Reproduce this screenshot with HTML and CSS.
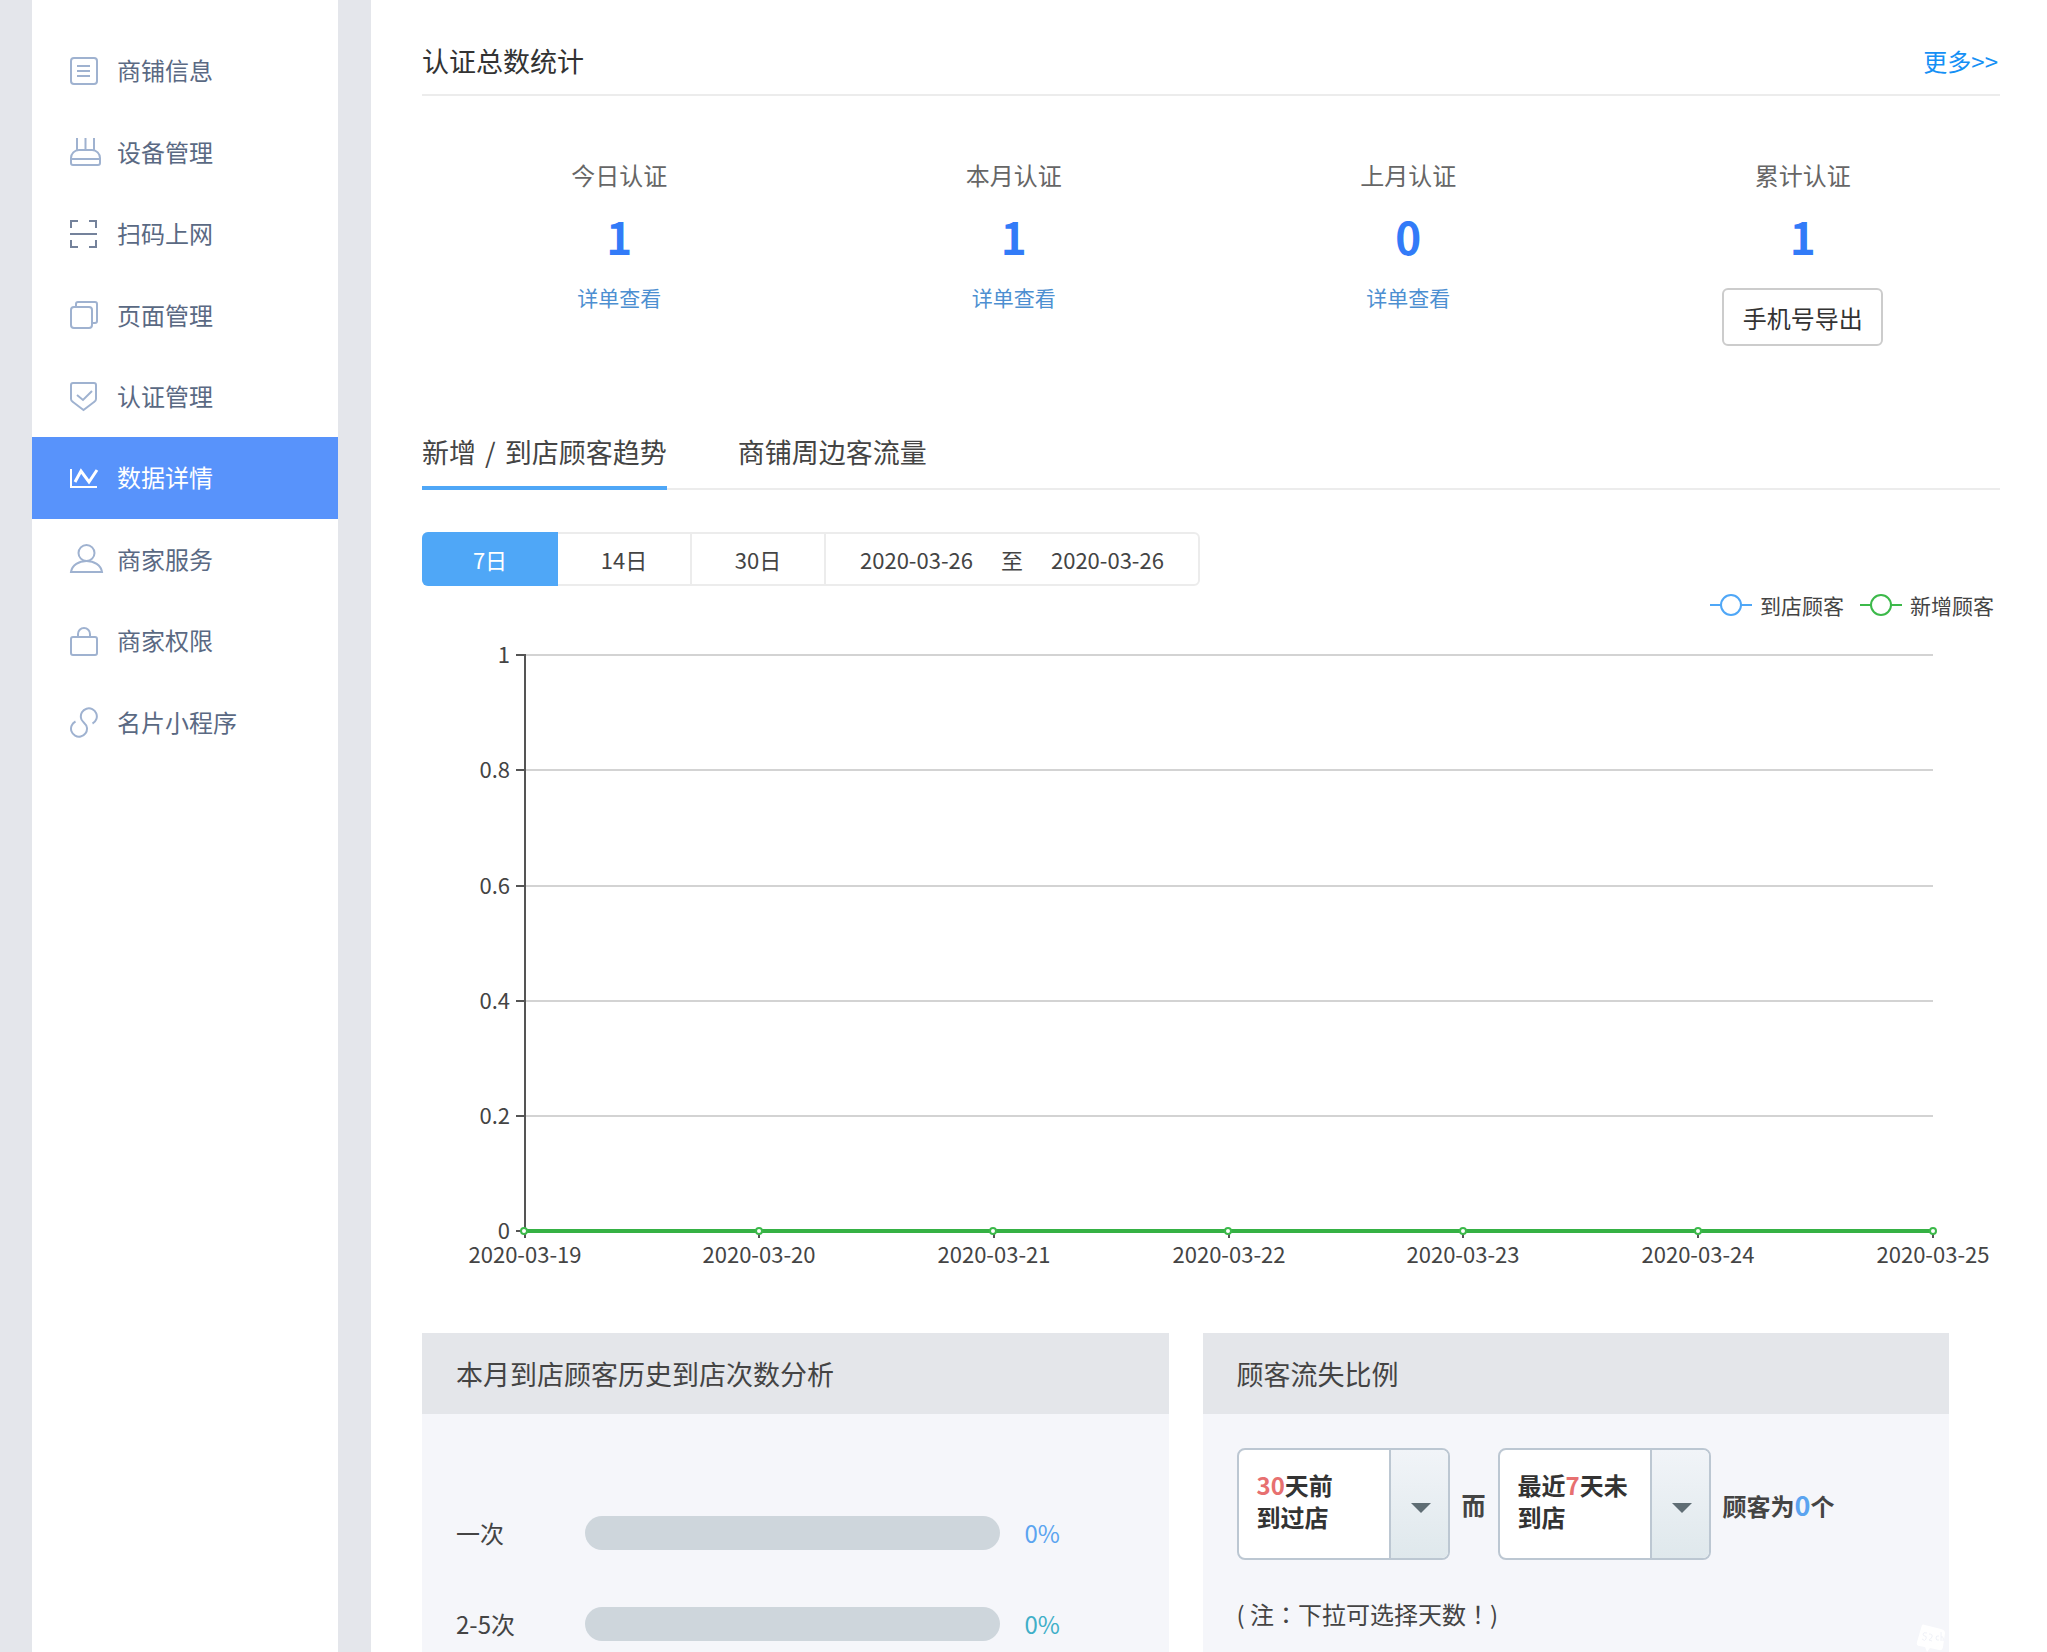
FILE: index.html
```html
<!DOCTYPE html>
<html lang="zh-CN">

<head>
    <meta charset="UTF-8">
    <meta name="viewport" content="width=device-width, initial-scale=1.0">
    <title>数据详情</title>
    <link rel="stylesheet" href="styles.css">
</head>

<body>
    <div class="page">
        <div class="sidebar">
            <nav class="menu">
                <a href="#">
                    <svg class="icon" viewBox="0 0 36 32"><rect x="2" y="3" width="26" height="26" rx="3"/><path d="M8 11h13M8 16h13M8 21h13"/></svg>
                    商铺信息
                </a>
                <a href="#">
                    <svg class="icon" viewBox="0 0 36 32"><path d="M8 2v12M16.500 2v12M25 2v12M2 27v-5a8 8 0 0 1 8-8h13a8 8 0 0 1 8 8v5q0 2-2 2H4q-2 0-2-2zM2 23h29"/></svg>
                    设备管理
                </a>
                <a href="#">
                    <svg class="icon icon-dark" viewBox="0 0 36 32"><path d="M2 10V3h7M20 3h7v7M1 16h27M2 22v7h7M20 29h7v-7"/></svg>
                    扫码上网
                </a>
                <a href="#">
                    <svg class="icon" viewBox="0 0 36 32"><rect x="2" y="8" width="21" height="21" rx="3"/><path d="M7 8V5q0-2 2-2h17q2 0 2 2v17q0 2-2 2h-3"/></svg>
                    页面管理
                </a>
                <a href="#">
                    <svg class="icon" viewBox="0 0 36 32"><path d="M4 3h21q2 0 2 2v14q0 2-2 3l-10.500 8L4 22q-2-1-2-3V5q0-2 2-2zM8 15l6 5 9-9"/></svg>
                    认证管理
                </a>
                <a href="#" class="active">
                    <svg class="icon" viewBox="0 0 36 32"><path d="M2 7v18h26"/><path class="thick" d="M6 20l6-11 8 11 8-12"/></svg>
                    数据详情
                </a>
                <a href="#">
                    <svg class="icon" viewBox="0 0 36 32"><circle cx="17.500" cy="10" r="8"/><path d="M2 29h31c-1-7-8-11-15.500-11S3 22 2 29z"/></svg>
                    商家服务
                </a>
                <a href="#">
                    <svg class="icon" viewBox="0 0 36 32"><rect x="2" y="12" width="26" height="18" rx="2"/><path d="M9 12V9a6 6 0 0 1 12 0v3"/></svg>
                    商家权限
                </a>
                <a href="#">
                    <svg class="icon" viewBox="0 0 36 32"><path d="M23.500 17.500A8 8 0 1 0 12 12c0 4 6 5 6 10A8 8 0 1 1 6.500 15.500"/></svg>
                    名片小程序
                </a>
            </nav>
        </div>

        <main class="main">
            <header class="head">
                <h1>认证总数统计</h1>
                <a href="#">更多&gt;&gt;</a>
            </header>

            <section class="stats">
                <div class="stat">
                    <p>今日认证</p>
                    <strong>1</strong>
                    <a href="#">详单查看</a>
                </div>
                <div class="stat">
                    <p>本月认证</p>
                    <strong>1</strong>
                    <a href="#">详单查看</a>
                </div>
                <div class="stat">
                    <p>上月认证</p>
                    <strong>0</strong>
                    <a href="#">详单查看</a>
                </div>
                <div class="stat">
                    <p>累计认证</p>
                    <strong>1</strong>
                    <button type="button">手机号导出</button>
                </div>
            </section>

            <div class="tabs">
                <button type="button" class="on">新增 <span>/</span> 到店顾客趋势</button>
                <button type="button">商铺周边客流量</button>
            </div>

            <div class="range">
                <button type="button" class="on">7日</button>
                <button type="button">14日</button>
                <button type="button">30日</button>
                <div class="dates">
                    <span>2020-03-26</span>
                    <span>至</span>
                    <span>2020-03-26</span>
                </div>
            </div>

            <div class="legend">
                <span class="blue"><svg viewBox="0 0 42 24"><path d="M0 12h42"/><circle cx="21" cy="12" r="10"/></svg>到店顾客</span>
                <span class="green"><svg viewBox="0 0 42 24"><path d="M0 12h42"/><circle cx="21" cy="12" r="10"/></svg>新增顾客</span>
            </div>

            <svg class="chart" viewBox="0 -20 1578 660">
                <path class="grid" d="M104 15h1407M104 130h1407M104 246h1407M104 361h1407M104 476h1407"/>
                <path class="axis" d="M103 14v584M94 15h9M94 130h9M94 246h9M94 361h9M94 476h9M94 591h9M337 591v7M572 591v7M807 591v7M1041 591v7M1276 591v7M1511 591v7"/>
                <g class="ylabel">
                    <text x="88" y="23">1</text>
                    <text x="88" y="138">0.8</text>
                    <text x="88" y="254">0.6</text>
                    <text x="88" y="369">0.4</text>
                    <text x="88" y="484">0.2</text>
                    <text x="88" y="599">0</text>
                </g>
                <g class="xlabel">
                    <text x="103" y="623">2020-03-19</text>
                    <text x="337" y="623">2020-03-20</text>
                    <text x="572" y="623">2020-03-21</text>
                    <text x="807" y="623">2020-03-22</text>
                    <text x="1041" y="623">2020-03-23</text>
                    <text x="1276" y="623">2020-03-24</text>
                    <text x="1511" y="623">2020-03-25</text>
                </g>
                <path class="line" d="M102 591h1409"/>
                <g class="dots">
                    <circle cx="102" cy="591" r="3"/>
                    <circle cx="337" cy="591" r="3"/>
                    <circle cx="571" cy="591" r="3"/>
                    <circle cx="806" cy="591" r="3"/>
                    <circle cx="1041" cy="591" r="3"/>
                    <circle cx="1276" cy="591" r="3"/>
                    <circle cx="1511" cy="591" r="3"/>
                </g>
            </svg>

            <div class="cards">
                <section class="card">
                    <h2>本月到店顾客历史到店次数分析</h2>
                    <div class="bars">
                        <div class="bar-row">
                            <span>一次</span>
                            <div class="bar"></div>
                            <span class="pct">0%</span>
                        </div>
                        <div class="bar-row">
                            <span>2-5次</span>
                            <div class="bar"></div>
                            <span class="pct teal">0%</span>
                        </div>
                    </div>
                </section>

                <section class="card">
                    <h2>顾客流失比例</h2>
                    <div class="lost">
                        <label class="pick">
                            <span><em>30</em>天前<br>到过店</span>
                            <select>
                                <option>30</option>
                                <option>60</option>
                                <option>90</option>
                            </select>
                        </label>
                        <b>而</b>
                        <label class="pick">
                            <span>最近<em>7</em>天未到店</span>
                            <select>
                                <option>7</option>
                                <option>14</option>
                                <option>30</option>
                            </select>
                        </label>
                        <b>顾客为<i>0</i>个</b>
                    </div>
                    <p class="tip" lang="ja">( 注：下拉可选择天数！)</p>
                    <svg class="bubble" viewBox="0 0 32 28"><path fill="#fff" d="M7 1q1-1 3 0l16 4q4 1 4 4l-2 14q-1 4-4 3l-9-2-3 4-2-5-6-1q-3-1-2-4z"/><path fill="none" stroke="#f0f2f8" d="M12 9q-4-1-4 1t2 2 1 3-4 0M14 10q4 0 3 3-2 3-3 3l3 1M24 12q-3-1-3 2t3 2M26 8v9m0-4q3-1 2 4"/></svg>
                </section>
            </div>
        </main>
    </div>
</body>

</html>
```

FILE: styles.css
```css
* {
    box-sizing: border-box;
}

body {
    margin: 0;
    font-family: "Noto Sans CJK SC", "Noto Sans", sans-serif;
    font-size: 24px;
    color: #444;
}

h1, h2, p {
    margin: 0;
    font-weight: normal;
}

a {
    text-decoration: none;
}

button {
    font-family: inherit;
    color: inherit;
    background: none;
    border: 0;
    padding: 0;
    cursor: pointer;
}

.page {
    display: flex;
    gap: 33px;
    min-height: 100vh;
    padding-left: 32px;
    background: #e4e6eb;
}

/* sidebar */
.sidebar {
    flex: none;
    width: 306px;
    padding-top: 30px;
    background: #fff;
}

.menu {
    display: grid;
    grid-template-rows: repeat(9, 1fr);
    height: 733px;
}

.menu a {
    display: flex;
    align-items: center;
    gap: 12px;
    padding: 0 0 2px 37px;
    color: #5a6983;
}

.menu a.active {
    background: #5893fb;
    color: #fff;
}

.icon {
    width: 36px;
    height: 32px;
    margin-top: 2px;
    fill: none;
    stroke: #9fb2d0;
    stroke-width: 2;
}

.icon-dark {
    stroke: #74829b;
}

.active .icon {
    stroke: #fff;
}

.icon .thick {
    stroke-width: 3;
}

/* main */
.main {
    flex: 1;
    min-width: 0;
    display: flex;
    flex-direction: column;
    padding: 30px 47px 0 51px;
    background: #fff;
}

.head {
    display: flex;
    justify-content: space-between;
    align-items: center;
    height: 66px;
    padding: 0 2px 4px 0;
    border-bottom: 2px solid #ececec;
}

.head h1 {
    font-size: 27px;
    color: #333;
}

.head a {
    color: #1590f5;
}

.stats {
    display: grid;
    grid-template-columns: repeat(4, 1fr);
    margin-top: 61px;
    text-align: center;
}

.stat {
    display: flex;
    flex-direction: column;
    align-items: center;
}

.stat p {
    line-height: 36px;
    color: #666;
}

.stat strong {
    margin-top: 13px;
    font-size: 44px;
    line-height: 60px;
    color: #327bf8;
}

.stat a {
    margin-top: 16px;
    font-size: 21px;
    line-height: 30px;
    color: #4d8fd1;
}

.stat button {
    margin-top: 22px;
    width: 161px;
    height: 58px;
    border: 2px solid #ccc;
    border-radius: 6px;
    font-size: 24px;
    color: #333;
}

.tabs {
    display: flex;
    gap: 71px;
    margin-top: 73px;
    border-bottom: 2px solid #ececec;
}

.tabs button {
    margin-bottom: -2px;
    padding-bottom: 1px;
    border-bottom: 4px solid transparent;
    font-size: 27px;
    line-height: 66px;
}

.tabs span {
    margin: 0 3px;
}

.tabs .on {
    border-color: #4fa7f7;
}

.range {
    display: flex;
    align-self: flex-start;
    height: 54px;
    margin-top: 42px;
    border: 2px solid #ececec;
    border-radius: 6px;
    font-size: 22px;
}

.range button {
    width: 134px;
    border-right: 2px solid #ececec;
    font-size: 22px;
}

.range .on {
    width: 136px;
    margin: -2px 0 -2px -2px;
    border: 0;
    border-radius: 6px 0 0 6px;
    background: #4fa7f7;
    color: #fff;
}

.dates {
    display: flex;
    align-items: center;
    gap: 28px;
    padding: 0 34px;
}

.legend {
    display: flex;
    justify-content: flex-end;
    gap: 16px;
    margin: 5px 6px 0 0;
    font-size: 21px;
    line-height: 28px;
}

.legend span {
    display: flex;
    align-items: center;
    gap: 8px;
}

.legend svg {
    width: 42px;
    height: 24px;
    fill: #fff;
    stroke-width: 2;
}

.blue svg {
    stroke: #4fa7f7;
}

.green svg {
    stroke: #3cb94a;
}

/* chart */
.chart {
    width: 100%;
    margin-top: 1px;
    font-size: 22px;
    fill: #444;
}

.grid {
    stroke: #d3d3d3;
    stroke-width: 2;
}

.axis {
    fill: none;
    stroke: #555;
    stroke-width: 2;
}

.line {
    stroke: #35b144;
    stroke-width: 4;
}

.dots {
    fill: #fff;
    stroke: #3cb94a;
    stroke-width: 2;
}

.ylabel {
    text-anchor: end;
}

.xlabel {
    text-anchor: middle;
}

/* cards */
.cards {
    flex: 1;
    display: grid;
    grid-template-columns: 1fr 1fr;
    gap: 34px;
    margin: 53px 51px 0 0;
}

.card {
    position: relative;
    background: #f5f6fa;
}

.card h2 {
    padding-left: 34px;
    font-size: 27px;
    line-height: 81px;
    background: #e4e6ea;
}

.bars {
    display: grid;
    gap: 57px;
    padding: 102px 109px 0 34px;
}

.bar-row {
    display: grid;
    grid-template-columns: 129px 1fr 35px;
    align-items: center;
    line-height: 34px;
}

.bar {
    height: 34px;
    margin-right: 25px;
    border-radius: 17px;
    background: #ced6dc;
}

.pct {
    color: #5ba4f0;
}

.teal {
    color: #3fafc8;
}

.lost {
    display: flex;
    align-items: center;
    gap: 12px;
    padding: 34px 0 0 34px;
}

.pick {
    position: relative;
    display: flex;
    width: 213px;
    height: 112px;
    border: 2px solid #bcc7d2;
    border-radius: 8px;
    background: #fff;
    overflow: hidden;
    font-weight: bold;
    line-height: 32px;
    color: #333;
}

.pick span {
    flex: 1;
    padding: 19px 18px 0 18px;
}

.pick em {
    font-style: normal;
    color: #e77070;
}

.pick select {
    appearance: none;
    width: 59px;
    border: 0;
    border-left: 2px solid #bcc7d2;
    background: linear-gradient(#f1f4f8, #dfe8ec);
    color: transparent;
}

.pick option {
    color: #333;
}

.pick::after {
    content: "";
    position: absolute;
    right: 17px;
    top: 53px;
    border: 10px solid transparent;
    border-top-color: #5f6d74;
    border-bottom: 0;
    pointer-events: none;
}

.lost i {
    font-style: normal;
    font-size: 27px;
    color: #5ba4f0;
}

.tip {
    margin-top: 36px;
    padding-left: 34px;
    font-family: "Noto Sans CJK JP", sans-serif;
    line-height: 36px;
}

.bubble {
    position: absolute;
    right: 2px;
    bottom: 0;
    width: 32px;
    height: 28px;
}
```
